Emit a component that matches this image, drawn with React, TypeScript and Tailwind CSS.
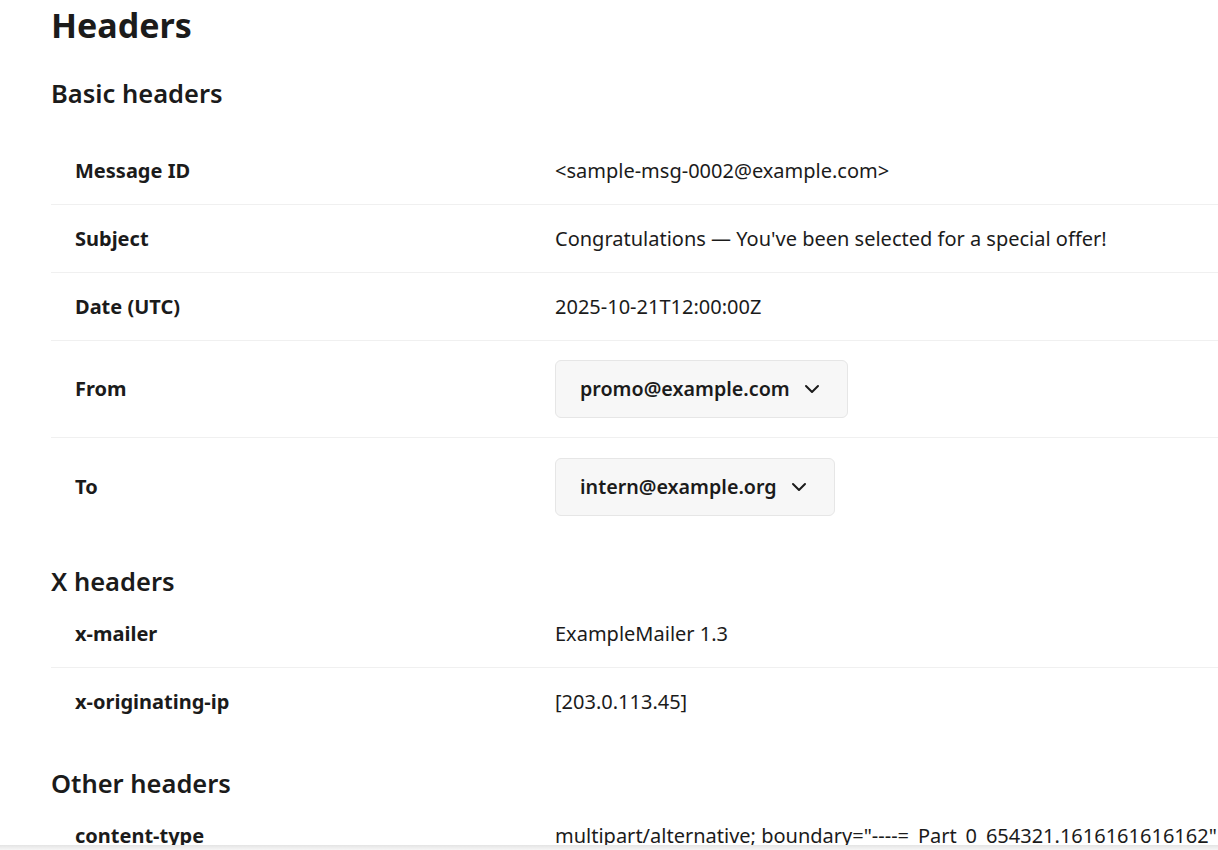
import { ChevronDown } from 'lucide-react'

type Row = { label: string; value: string; menu?: boolean }

const basic: Row[] = [
  { label: 'Message ID', value: '<sample-msg-0002@example.com>' },
  { label: 'Subject', value: "Congratulations — You've been selected for a special offer!" },
  { label: 'Date (UTC)', value: '2025-10-21T12:00:00Z' },
  { label: 'From', value: 'promo@example.com', menu: true },
  { label: 'To', value: 'intern@example.org', menu: true },
]

const xHeaders: Row[] = [
  { label: 'x-mailer', value: 'ExampleMailer 1.3' },
  { label: 'x-originating-ip', value: '[203.0.113.45]' },
]

const other: Row[] = [
  { label: 'content-type', value: 'multipart/alternative; boundary="----=_Part_0_654321.1616161616162"' },
]

function HeaderTable({ rows }: { rows: Row[] }) {
  return (
    <div className="w-[1300px]">
      {rows.map((row, i) => (
        <div
          key={row.label}
          className={
            'grid grid-cols-[504px_1fr] items-center ' +
            (row.menu ? 'h-[97px] ' : 'h-[68px] ') +
            (i < rows.length - 1 ? 'border-b border-[#f0f0f0]' : '')
          }
        >
          <div className="pl-6 text-[20px] font-bold">{row.label}</div>
          <div className="text-[20px]">
            {row.menu ? (
              <button className="flex h-[58px] items-center gap-[10px] rounded-md border border-[#e6e6e6] bg-[#f7f7f7] pl-6 pr-[23px] text-[19.7px] font-semibold">
                {row.value}
                <ChevronDown size={24} strokeWidth={2} />
              </button>
            ) : (
              <span className="whitespace-nowrap">{row.value}</span>
            )}
          </div>
        </div>
      ))}
    </div>
  )
}

export default function App() {
  return (
    <div className="h-[850px] w-[1218px] overflow-hidden bg-white text-[#1b1b1b] [font-family:'Noto_Sans',sans-serif]">
      <div className="pl-[51px] pt-[5px]">
        <h1 className="text-[34px] leading-10 font-bold">Headers</h1>

        <h2 className="mt-[30px] text-[25.5px] leading-9 font-semibold">Basic headers</h2>
        <div className="mt-[26px]">
          <HeaderTable rows={basic} />
        </div>

        <h2 className="mt-[28px] text-[25.5px] leading-9 font-semibold">X headers</h2>
        <div className="mt-px">
          <HeaderTable rows={xHeaders} />
        </div>

        <h2 className="mt-[29px] text-[25.5px] leading-9 font-semibold">Other headers</h2>
        <div className="mt-px">
          <HeaderTable rows={other} />
        </div>
      </div>
      <div className="fixed bottom-0 left-0 h-[5px] w-[1218px] bg-gradient-to-b from-[#e4e4e4] to-[#f6f6f6]" />
    </div>
  )
}
